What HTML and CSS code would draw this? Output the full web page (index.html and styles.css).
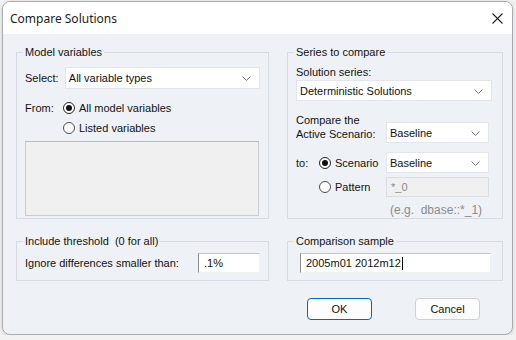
FILE: index.html
```html
<!DOCTYPE html>
<html>
<head>
    <title>Compare Solutions</title>
    <link rel="stylesheet" href="styles.css">
</head>
<body>
    <div class="window">
        <div class="titlebar">
            <span class="title">Compare Solutions</span>
            <svg class="close" width="11" height="11" viewBox="0 0 11 11">
                <path d="M0.5 0.5 L10.5 10.5 M10.5 0.5 L0.5 10.5" stroke="#222" stroke-width="1.1" fill="none"/>
            </svg>
        </div>

        <div class="content">
            <fieldset class="group">
                <legend>Model variables</legend>
                <div class="row select-row">
                    <span class="label-select">Select:</span>
                    <div class="combo combo-select">
                        <span>All variable types</span>
                        <svg class="chevron" width="9" height="5" viewBox="0 0 9 5"><path d="M0.5 0.5 L4.5 4.5 L8.5 0.5" stroke="#777" fill="none"/></svg>
                    </div>
                </div>
                <div class="from">
                    <span class="label-from">From:</span>
                    <div class="radios">
                        <div class="radio-row"><span class="radio checked"></span>All model variables</div>
                        <div class="radio-row"><span class="radio"></span>Listed variables</div>
                    </div>
                </div>
                <div class="listbox"></div>
            </fieldset>

            <fieldset class="group">
                <legend>Series to compare</legend>
                <div class="caption">Solution series:</div>
                <div class="combo combo-series">
                    <span>Deterministic Solutions</span>
                    <svg class="chevron" width="9" height="5" viewBox="0 0 9 5"><path d="M0.5 0.5 L4.5 4.5 L8.5 0.5" stroke="#777" fill="none"/></svg>
                </div>
                <div class="row compare-row">
                    <div class="label-compare">Compare the<br>Active Scenario:</div>
                    <div class="combo combo-small">
                        <span>Baseline</span>
                        <svg class="chevron" width="9" height="5" viewBox="0 0 9 5"><path d="M0.5 0.5 L4.5 4.5 L8.5 0.5" stroke="#777" fill="none"/></svg>
                    </div>
                </div>
                <div class="row to-row">
                    <span class="label-to">to:</span>
                    <div class="radio-opt"><span class="radio checked"></span>Scenario</div>
                    <div class="combo combo-small">
                        <span>Baseline</span>
                        <svg class="chevron" width="9" height="5" viewBox="0 0 9 5"><path d="M0.5 0.5 L4.5 4.5 L8.5 0.5" stroke="#777" fill="none"/></svg>
                    </div>
                </div>
                <div class="row pattern-row">
                    <span class="label-to"></span>
                    <div class="radio-opt"><span class="radio"></span>Pattern</div>
                    <div class="input-disabled">*_0</div>
                </div>
                <div class="hint">(e.g.&nbsp; dbase::*_1)</div>
            </fieldset>

            <fieldset class="group">
                <legend>Include threshold&nbsp; (0 for all)</legend>
                <div class="row threshold-row">
                    <span class="label-threshold">Ignore differences smaller than:</span>
                    <div class="textbox textbox-small">.1%</div>
                </div>
            </fieldset>

            <fieldset class="group">
                <legend>Comparison sample</legend>
                <div class="textbox textbox-sample">2005m01 2012m12<span class="caret"></span></div>
            </fieldset>

            <div class="buttons">
                <button type="button" class="btn btn-default">OK</button>
                <button type="button" class="btn">Cancel</button>
            </div>
        </div>
    </div>
</body>
</html>
```

FILE: styles.css
```css
body {
    margin: 0;
    background-color: #f2f2f2;
    font-family: "Liberation Sans", Arial, sans-serif;
    font-size: 11px;
    color: #111;
}

.window {
    margin: 1px 0 0 2px;
    width: 509px;
    height: 332px;
    border: 1px solid #a8abb0;
    border-radius: 8px;
    overflow: hidden;
    background-color: #eef1f6;
    box-shadow: 0 1px 4px rgba(0,0,0,0.15);
}

.titlebar {
    height: 32px;
    background-color: #fff;
    display: flex;
    align-items: center;
    justify-content: space-between;
    padding: 0 8px 0 7px;
}

.title {
    font-family: "Noto Sans", "Open Sans", sans-serif;
    font-size: 12px;
    color: #1c1c1c;
}

.close {
    margin-right: 1px;
}

.content {
    display: grid;
    grid-template-columns: 253px 216px;
    column-gap: 18px;
    row-gap: 15px;
    padding: 11px 10px 0 13px;
}

.group {
    margin: 0;
    padding: 0 8px 0 8px;
    border: 1px solid #d7dbe2;
    min-width: 0;
}

legend {
    padding: 0 2px;
    margin-left: -2px;
    line-height: 14px;
}

.row {
    display: flex;
    align-items: center;
}

.select-row {
    margin-top: 8px;
}

.label-select {
    width: 40px;
}

.combo {
    position: relative;
    height: 21px;
    background-color: #fff;
    border: 1px solid #e2e5ea;
    box-sizing: border-box;
    display: flex;
    align-items: center;
    padding-left: 3px;
}

.chevron {
    position: absolute;
    right: 8px;
    top: 8px;
}

.combo-select {
    width: 196px;
    height: 22px;
}

.from {
    display: flex;
    margin-top: 9px;
}

.label-from {
    width: 38px;
    line-height: 20px;
}

.radio-row,
.radio-opt {
    display: flex;
    align-items: center;
    height: 20px;
}

.radio {
    width: 12px;
    height: 12px;
    box-sizing: border-box;
    border: 1px solid #4a4a4a;
    border-radius: 50%;
    background-color: #fff;
    margin-right: 4px;
    position: relative;
}

.radio.checked {
    border-color: #222;
}

.radio.checked::after {
    content: "";
    position: absolute;
    left: 2px;
    top: 2px;
    width: 6px;
    height: 6px;
    border-radius: 50%;
    background-color: #111;
}

.listbox {
    margin-top: 3px;
    width: 234px;
    height: 75px;
    box-sizing: border-box;
    background-color: #f0f0f0;
    border: 1px solid #c9ccd1;
    border-top-color: #b5b8bd;
}

.caption {
    margin-top: 6px;
    line-height: 14px;
}

.combo-series {
    margin-top: 1px;
    width: 196px;
}

.compare-row {
    margin-top: 12px;
    align-items: flex-end;
}

.label-compare {
    width: 90px;
    line-height: 14px;
    padding-bottom: 2px;
}

.combo-small {
    width: 103px;
}

.to-row {
    margin-top: 9px;
}

.label-to {
    width: 23px;
}

.radio-opt {
    width: 67px;
}

.pattern-row {
    margin-top: 4px;
}

.input-disabled {
    width: 103px;
    height: 20px;
    box-sizing: border-box;
    background-color: #f0f0f0;
    border: 1px solid #dadde2;
    color: #8a8a8a;
    padding-left: 4px;
    line-height: 18px;
}

.hint {
    margin: 6px 0 1px 94px;
    line-height: 14px;
    color: #8c8c8c;
    font-size: 12px;
}

.threshold-row {
    margin-top: 5px;
    margin-bottom: 7px;
}

.label-threshold {
    width: 173px;
}

.textbox {
    height: 20px;
    box-sizing: border-box;
    background-color: #fff;
    border: 1px solid #f2f2f2;
    border-top-color: #c4c4c4;
    border-left-color: #8e8e8e;
    padding-left: 5px;
    line-height: 18px;
    display: flex;
    align-items: center;
}

.textbox-small {
    width: 62px;
}

.textbox-sample {
    margin: 5px 0 7px 4px;
    width: 191px;
}

.caret {
    display: inline-block;
    width: 1px;
    height: 13px;
    background-color: #000;
    margin-left: 1px;
}

.buttons {
    grid-column: 2;
    display: flex;
    gap: 43px;
    padding-left: 20px;
    margin-top: 2px;
}

.btn {
    width: 65px;
    height: 22px;
    font-family: "Liberation Sans", Arial, sans-serif;
    font-size: 11px;
    color: #111;
    background-color: #fdfdfd;
    border: 1px solid #d0d0d0;
    border-radius: 4px;
    padding: 0;
}

.btn-default {
    border-color: #0067c0;
}
```
